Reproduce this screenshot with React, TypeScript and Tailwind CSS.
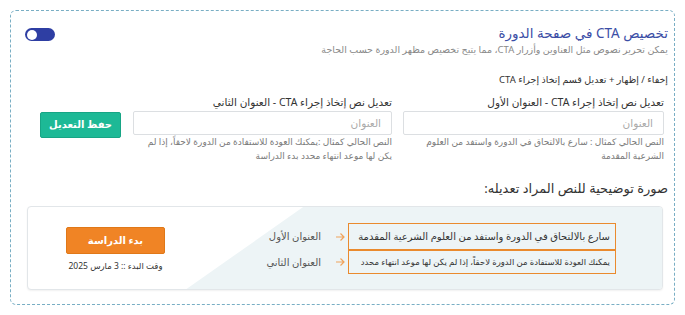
import React from 'react';

const font = { fontFamily: '"Noto Sans", "DejaVu Sans", sans-serif' };

const Field: React.FC<{ label: string; hint: string; width: string }> = ({ label, hint, width }) => (
  <div className={`${width} flex flex-col`}>
    <label className="text-[10.5px] leading-[14px] text-[#333] mb-[2px]">{label}</label>
    <input
      placeholder="العنوان"
      className="h-[24px] w-full border border-[#dcdfe2] rounded-[2px] px-[10px] text-[10.5px] placeholder:text-[#aaa] outline-none"
    />
    <p className="text-[9px] leading-[14px] text-[#7a7a7a]">{hint}</p>
  </div>
);

export default function App() {
  return (
    <div dir="rtl" className="w-[685px] h-[315px] bg-white p-[10px]" style={font}>
      <div className="h-[295px] border border-dashed border-[#79aec4] rounded-[6px] pt-[13px] pr-[6px] pl-[14px]">
        <div className="flex justify-between items-start">
          <div>
            <h2 className="text-[13.5px] leading-[18px] text-[#3b4ea6]">تخصيص CTA في صفحة الدورة</h2>
            <p className="mt-[1px] text-[9.5px] leading-[14px] text-[#8a8a8a]">
              يمكن تحرير نصوص مثل العناوين وأزرار CTA، مما يتيح تخصيص مظهر الدورة حسب الحاجة
            </p>
          </div>
          <button className="mt-[4px] w-[30px] h-[13px] rounded-full bg-[#2e3ea3] flex items-center justify-end px-[2px]">
            <span className="w-[10px] h-[10px] rounded-full bg-white" />
          </button>
        </div>

        <h3 className="mt-[16px] text-[9.5px] leading-[14px] text-[#333]">إخفاء / إظهار + تعديل قسم إتخاذ إجراء CTA</h3>

        <div className="mt-[8px] flex gap-[11px] pr-[4px]">
          <Field
            width="w-[261px]"
            label="تعديل نص إتخاذ إجراء CTA - العنوان الأول"
            hint="النص الحالي كمثال : سارع بالالتحاق في الدورة واستفد من العلوم الشرعية المقدمة"
          />
          <Field
            width="w-[259px]"
            label="تعديل نص إتخاذ إجراء CTA - العنوان الثاني"
            hint="النص الحالي كمثال :يمكنك العودة للاستفادة من الدورة لاحقاً، إذا لم يكن لها موعد انتهاء محدد بدء الدراسة"
          />
          <div className="pt-[15px] mr-[1px]">
            <button className="w-[81px] h-[26px] rounded-[2px] bg-[#1db996] border border-[#17a585] text-white text-[10px] font-bold">
              حفظ التعديل
            </button>
          </div>
        </div>

        <h3 className="mt-[16px] text-[13px] leading-[18px] text-[#333]">صورة توضيحية للنص المراد تعديله:</h3>

        <div className="relative mt-[9px] ml-[2px] mr-[5px] h-[84px] rounded-[4px] border border-[#e2e6e9] bg-white shadow-[0_1px_2px_rgba(0,0,0,0.06)] overflow-hidden">
          <div className="absolute inset-0 bg-[#edf4f6] [clip-path:polygon(43.4%_0,100%_0,100%_100%,25%_100%)]" />
          <div className="relative flex items-start h-full pr-[46px] pl-[38px] pt-[16px]">
            <div className="flex flex-col">
              <div className="w-[268px] h-[27px] border border-[#ea8a2e] flex items-center px-[5px] text-[10px] font-medium whitespace-nowrap text-[#333]">
                سارع بالالتحاق في الدورة واستفد من العلوم الشرعية المقدمة
              </div>
              <div className="w-[268px] h-[24px] border border-[#ea8a2e] flex items-center px-[5px] text-[8.5px] whitespace-nowrap text-[#333]">
                يمكنك العودة للاستفادة من الدورة لاحقاً، إذا لم يكن لها موعد انتهاء محدد
              </div>
            </div>
            <div className="flex flex-col">
              {['العنوان الأول', 'العنوان الثاني'].map((t, i) => (
                <div key={t} className={`${i === 0 ? 'h-[27px]' : 'h-[24px]'} flex items-center`}>
                  <svg width="10" height="10" viewBox="0 0 10 10" className="mr-[3px] ml-[14px]">
                    <path d="M1 5h8M5.5 1.5L9 5l-3.5 3.5" fill="none" stroke="#f0a35c" strokeWidth="1.2" />
                  </svg>
                  <span className="text-[10px] text-[#555]">{t}</span>
                </div>
              ))}
            </div>
            <div className="mr-auto flex flex-col items-center pt-[4px]">
              <button className="w-[99px] h-[27px] rounded-[2px] bg-[#f08425] border border-[#e07818] text-white text-[10px] font-semibold">
                بدء الدراسة
              </button>
              <span className="mt-[6px] text-[8.5px] text-[#333]">وقت البدء :: 3 مارس 2025</span>
            </div>
          </div>
        </div>
      </div>
    </div>
  );
}
